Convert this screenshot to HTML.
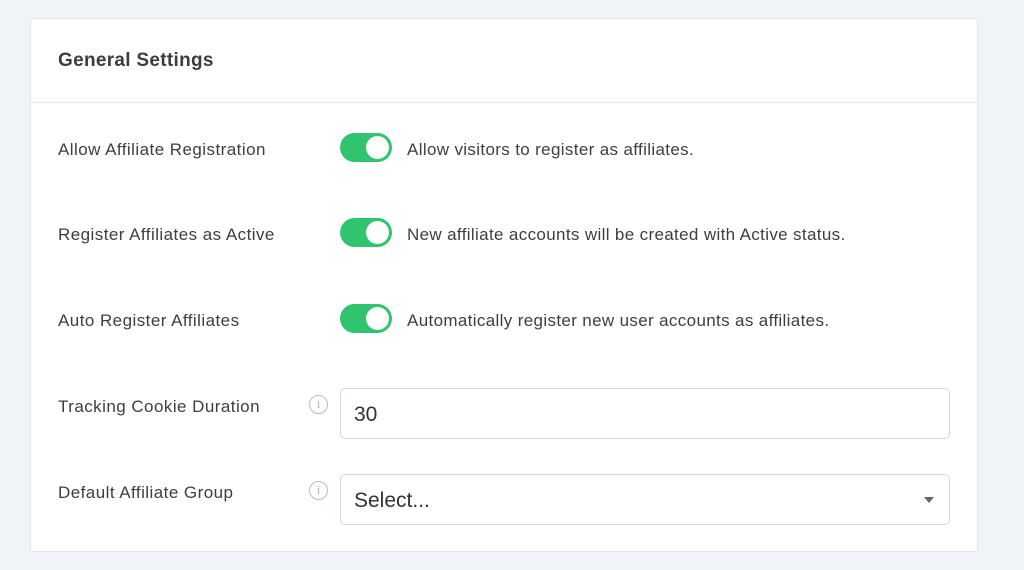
<!DOCTYPE html>
<html><head><style>
body{margin:0;width:1024px;height:570px;background:#f1f4f7;font-family:"Liberation Sans",sans-serif;position:relative;overflow:hidden}
.card{position:absolute;left:30px;top:18px;width:948px;height:534px;background:#fff;border:1px solid #e3e8ee;box-sizing:border-box}
.hd{position:absolute;left:0;top:0;right:0;height:83px;border-bottom:1px solid #e3e8ee}
.hd span{position:absolute;left:27px;top:31px;font-size:19px;font-weight:bold;color:#3a3d42;letter-spacing:0.3px}
.lbl{position:absolute;left:58px;font-size:17px;letter-spacing:0.45px;color:#3b3f44}
.tg{position:absolute;left:340px;width:52px;height:29px;border-radius:15px;background:#30c46e}
.tg::after{content:"";position:absolute;right:3px;top:3px;width:23px;height:23px;border-radius:50%;background:#fff}
.ds{position:absolute;left:407px;font-size:17px;letter-spacing:0.35px;color:#3b3f44}
.inp{position:absolute;left:340px;width:610px;height:51px;border:1px solid #d0d8e0;border-radius:5px;box-sizing:border-box;font-size:21px;color:#2f3237;padding:14px 0 0 13px}
.info{position:absolute;left:309px;width:19px;height:19px;border:1.5px solid #aebdcc;border-radius:50%;box-sizing:border-box;color:#aebdcc;font-size:13px;text-align:center;line-height:16px;font-family:"Liberation Serif",serif}
.arr{position:absolute;right:15px;top:22px;width:0;height:0;border-left:5px solid transparent;border-right:5px solid transparent;border-top:6px solid #666}
</style></head><body>
<div class="card"><div class="hd"><span>General Settings</span></div></div>
<div class="lbl" style="top:140px">Allow Affiliate Registration</div>
<div class="tg" style="top:133px"></div>
<div class="ds" style="top:140px">Allow visitors to register as affiliates.</div>
<div class="lbl" style="top:225px">Register Affiliates as Active</div>
<div class="tg" style="top:218px"></div>
<div class="ds" style="top:225px">New affiliate accounts will be created with Active status.</div>
<div class="lbl" style="top:311px">Auto Register Affiliates</div>
<div class="tg" style="top:304px"></div>
<div class="ds" style="top:311px">Automatically register new user accounts as affiliates.</div>
<div class="lbl" style="top:397px">Tracking Cookie Duration</div>
<div class="info" style="top:395px">i</div>
<div class="inp" style="top:388px">30</div>
<div class="lbl" style="top:483px">Default Affiliate Group</div>
<div class="info" style="top:481px">i</div>
<div class="inp" style="top:474px">Select...<div class="arr"></div></div>
</body></html>
